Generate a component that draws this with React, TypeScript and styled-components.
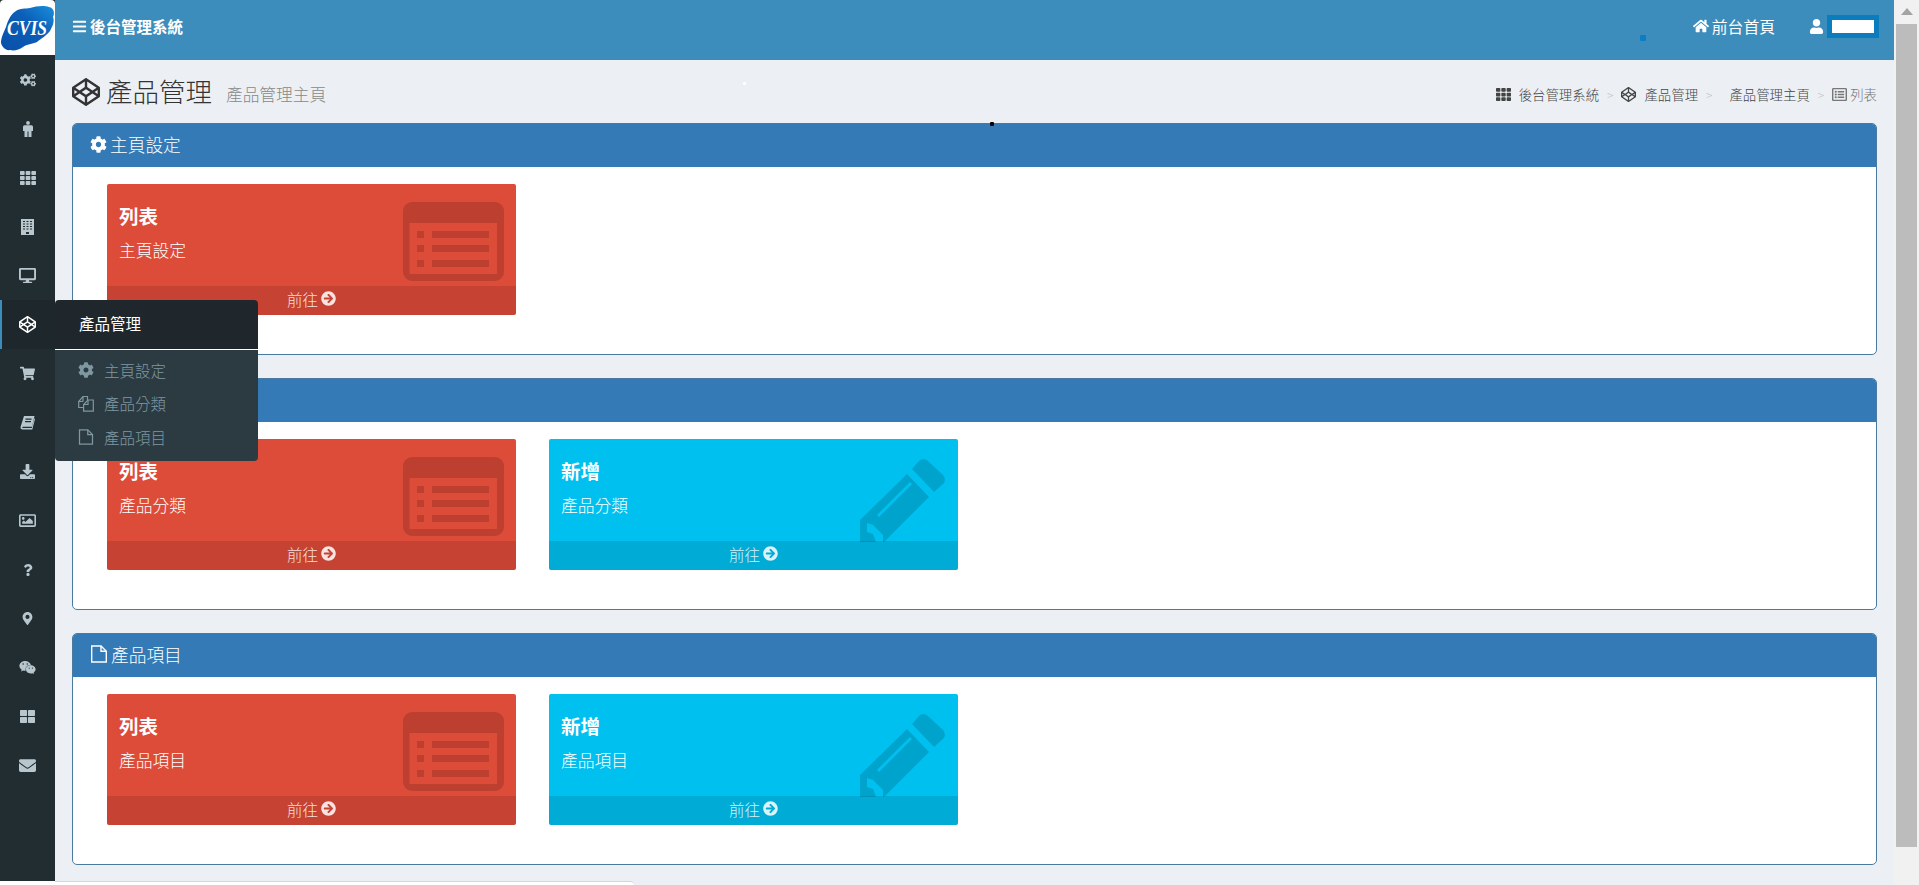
import React, { FC, ReactNode } from "react";
import styled, { createGlobalStyle } from "styled-components";
import {
  FaArrowCircleRight,
  FaBars,
  FaCodepen,
  FaCog,
  FaCogs,
  FaDesktop,
  FaDownload,
  FaEnvelope,
  FaHome,
  FaMapMarkerAlt,
  FaQuestion,
  FaRegImage,
  FaRegListAlt,
  FaShoppingCart,
  FaTh,
  FaThLarge,
  FaUser,
  FaWeixin,
} from "react-icons/fa";

const GlobalStyle = createGlobalStyle`
  html, body {
    margin: 0;
    padding: 0;
    overflow: hidden;
    background: #fff;
  }
  * {
    box-sizing: border-box;
  }
  body {
    font-family: "Noto Sans CJK TC", "Noto Sans", sans-serif;
  }
`;

const Screen = styled.div`
  width: 1919px;
  height: 885px;
  display: flex;
  overflow: hidden;
`;

const Page = styled.div`
  width: 1894px;
  display: flex;
  flex-direction: column;
`;

const Body = styled.div`
  height: 881px;
  display: flex;
`;

const Sidebar = styled.aside`
  width: 55px;
  background: #222d32;
  flex: none;
`;

const LogoBox = styled.div`
  height: 55px;
  background: #fff;
  border-radius: 4px 4px 0 0;
`;

const MenuItem = styled.div<{ $active?: boolean; $size: number }>`
  position: relative;
  height: 49px;
  display: flex;
  align-items: center;
  justify-content: center;
  font-size: ${(p) => p.$size}px;
  color: ${(p) => (p.$active ? "#fff" : "#b8c7ce")};
  background: ${(p) => (p.$active ? "#1e282c" : "transparent")};
  border-left: 2px solid ${(p) => (p.$active ? "#3c8dbc" : "transparent")};
  padding-right: 2px;
`;

const Flyout = styled.div`
  position: absolute;
  left: 53px;
  top: 0;
  width: 203px;
  z-index: 5;
`;

const FlyoutTitle = styled.div`
  height: 49px;
  padding: 0 0 4px 24px;
  display: flex;
  align-items: center;
  background: #20272c;
  border-radius: 4px 4px 0 0;
  color: #fff;
  font-size: 15.5px;
`;

const FlyoutList = styled.div`
  border-top: 1px solid #fff;
  background: #2c3b41;
  border-radius: 0 0 4px 4px;
  padding: 4px 0 6px;
`;

const FlyoutRow = styled.div`
  height: 33.5px;
  display: flex;
  align-items: center;
  padding: 0 0 2px 23px;
  gap: 10px;
  color: #7f97a1;
  font-size: 15.5px;
  font-weight: 300;
  svg {
    width: 16px;
    font-size: 16px;
    flex: none;
  }
`;

const Main = styled.div`
  flex: 1;
  display: flex;
  flex-direction: column;
  background: #ecf0f5;
  position: relative;
`;

const TopBar = styled.header`
  height: 60px;
  background: #3c8dbc;
  color: #fff;
  display: flex;
  align-items: center;
  padding: 0 15px 8px 17px;
  position: relative;
`;

const Brand = styled.div`
  display: flex;
  align-items: center;
  gap: 3px;
  font-size: 15.5px;
  font-weight: 700;
  flex: 1;
  svg {
    font-size: 15px;
  }
`;

const TopLink = styled.div`
  display: flex;
  align-items: center;
  gap: 3px;
  font-size: 15.8px;
  margin-right: 34px;
  svg {
    font-size: 16px;
  }
`;

const UserBox = styled.div`
  display: flex;
  align-items: center;
  gap: 3px;
  svg {
    font-size: 15px;
  }
`;

const UserName = styled.div`
  width: 52px;
  height: 23px;
  border: 5px solid #0b7dbd;
  background: #fff;
`;

const Speck = styled.span<{ $x: number; $y: number; $size: number; $color: string }>`
  position: absolute;
  left: ${(p) => p.$x}px;
  top: ${(p) => p.$y}px;
  width: ${(p) => p.$size}px;
  height: ${(p) => p.$size}px;
  background: ${(p) => p.$color};
  border-radius: 1px;
  z-index: 2;
`;

const Content = styled.main`
  flex: 1;
  padding: 0 17px;
`;

const TitleRow = styled.div`
  height: 63px;
  display: flex;
  align-items: center;
`;

const PageTitle = styled.h1`
  margin: 0;
  display: flex;
  align-items: center;
  gap: 6px;
  font-size: 26.5px;
  font-weight: 300;
  line-height: 1;
  color: #333;
  svg {
    font-size: 28px;
  }
`;

const SubTitle = styled.small`
  font-size: 16.7px;
  font-weight: 300;
  color: #888;
  margin: 5px 0 0 14px;
`;

const Crumbs = styled.nav`
  margin-left: auto;
  margin-top: 5px;
  display: flex;
  align-items: center;
  font-size: 13.4px;
  font-weight: 300;
  color: #444;
`;

const Crumb = styled.span<{ $gap?: number; $muted?: boolean }>`
  display: flex;
  align-items: center;
  gap: ${(p) => p.$gap ?? 8}px;
  color: ${(p) => (p.$muted ? "#777" : "#444")};
  svg {
    font-size: 15px;
  }
`;

const CrumbSep = styled.span<{ $wide?: boolean }>`
  color: #bbb;
  font-size: 12px;
  margin: 0 ${(p) => (p.$wide ? 17 : 8)}px 0 8px;
`;

const PanelStack = styled.div`
  display: flex;
  flex-direction: column;
  gap: 23.5px;
`;

const Panel = styled.section`
  height: 231.5px;
  background: #fff;
  border: 1px solid #4a7aa0;
  border-radius: 5px;
  overflow: hidden;
`;

const PanelHead = styled.div`
  height: 43px;
  background: #337ab7;
  color: #fff;
  display: flex;
  align-items: center;
  gap: 3px;
  padding: 0 0 3px 17px;
  font-size: 17.7px;
  font-weight: 300;
  svg {
    font-size: 17px;
    flex: none;
  }
`;

const PanelBody = styled.div`
  display: flex;
  gap: 33px;
  padding: 16.6px 34px;
`;

const Card = styled.div<{ $color: string }>`
  position: relative;
  width: 409px;
  height: 131px;
  border-radius: 2px;
  background: ${(p) => p.$color};
  color: #fff;
  display: flex;
  flex-direction: column;
`;

const CardText = styled.div`
  flex: 1;
  padding: 17px 12px 0;
`;

const CardTitle = styled.div`
  font-size: 19.5px;
  font-weight: 700;
  line-height: 30px;
`;

const CardSub = styled.div`
  font-size: 16.8px;
  font-weight: 300;
  line-height: 24px;
  margin-top: 7px;
`;

const CardIcon = styled.svg<{ $top: number }>`
  position: absolute;
  right: 12px;
  top: ${(p) => p.$top}px;
  fill: rgba(0, 0, 0, 0.15);
`;

const CardFoot = styled.div`
  height: 29px;
  padding-bottom: 3px;
  background: rgba(0, 0, 0, 0.1);
  color: rgba(255, 255, 255, 0.85);
  display: flex;
  align-items: center;
  justify-content: center;
  gap: 3px;
  font-size: 15.5px;
  font-weight: 300;
  border-radius: 0 0 2px 2px;
  svg {
    font-size: 15px;
  }
`;

const FootStrip = styled.div`
  height: 4px;
  display: flex;
  background: #ecf0f5;
`;

const FootLeft = styled.div`
  width: 55px;
  background: #fff;
`;

const FootBar = styled.div`
  width: 579px;
  background: #fff;
  border-top: 1px solid #d2d6de;
  border-radius: 0 4px 0 0;
`;

const ScrollRail = styled.div`
  width: 25px;
  background: #f1f1f1;
  padding: 8px 2px 0;
  display: flex;
  flex-direction: column;
`;

const ScrollArrow = styled.div`
  width: 0;
  height: 0;
  margin: 0 auto 9px;
  border-left: 6px solid transparent;
  border-right: 6px solid transparent;
  border-bottom: 7px solid #a3a3a3;
`;

const ScrollThumb = styled.div`
  height: 823px;
  background: #bcbcbc;
`;

const Logo: FC = () => (
  <svg width="55" height="55" viewBox="0 0 55 55">
    <defs>
      <linearGradient id="logoBlue" x1="0" y1="1" x2="1" y2="0">
        <stop offset="0" stopColor="#0a4fa8" />
        <stop offset="0.6" stopColor="#0b5fb8" />
        <stop offset="1" stopColor="#1b8fdc" />
      </linearGradient>
    </defs>
    <path
      fill="url(#logoBlue)"
      d="M1 43C1 38 3 34 6 27C8 20 11 14 16 11C20 8 25 9 30 8C36 6 44 5 49 7C54 8 55 13 53 17C55 22 52 27 50 31C46 36 42 38 37 42C32 44 27 44 23 47C19 50 14 51 10 50C6 51 2 47 1 43Z"
    />
    <text
      x="7"
      y="34.5"
      fontFamily="'Liberation Serif', serif"
      fontStyle="italic"
      fontWeight="700"
      fontSize="20"
      fill="#fff"
      textLength="40"
      lengthAdjust="spacingAndGlyphs"
    >
      CVIS
    </text>
  </svg>
);

const FilesIcon: FC = () => (
  <svg width="16" height="17" viewBox="0 0 16 17" fill="none" stroke="currentColor" strokeWidth="1.2">
    <path d="M5.5 12.5H.7V6.5L5 1.5H9.5V5.5" />
    <path d="M5 6.5L.7 6.5M5 1.5V6.5" />
    <path d="M5.6 16.2V9.5L10 5H15.3V16.2Z" />
    <path d="M10 5V9.5H5.6" />
  </svg>
);

const FileOutline: FC<{ size?: number }> = ({ size = 18 }) => (
  <svg height={size} width={size} viewBox="0 0 18 18" fill="none" stroke="currentColor" strokeWidth="1.4">
    <path d="M1.7 1H11L16.3 6.3V17H1.7Z" />
    <path d="M11 1V6.3H16.3" />
  </svg>
);

const SlantBook: FC = () => (
  <svg width="15" height="14" viewBox="0 0 15 14" fill="currentColor">
    <path
      fillRule="evenodd"
      d="M4 0H14.5L12 10.8H3C2.2 10.8 2 11.6 2.6 12H11.8L14.3 2.2L15 3L12.3 13.6H2.6C1 13.6.2 12.3.6 10.8ZM5.5 2.6V3.8H11.5V2.6ZM5 5V6.2H11V5Z"
    />
  </svg>
);

const PersonIcon: FC = () => (
  <svg width="10" height="16" viewBox="0 0 10 16" fill="currentColor">
    <circle cx="5" cy="1.9" r="1.9" />
    <path d="M1.5 4.2H8.5Q10 4.2 10 5.8V10H8.5V16H5.5V10.5H4.5V16H1.5V10H0V5.8Q0 4.2 1.5 4.2Z" />
  </svg>
);

const BuildingIcon: FC = () => (
  <svg width="13" height="16" viewBox="0 0 13 16" fill="currentColor">
    <path
      fillRule="evenodd"
      d="M0 0H13V16H0ZM2 2V3H4V2ZM5.5 2V3H7.5V2ZM9 2V3H11V2ZM2 4.5V5.5H4V4.5ZM5.5 4.5V5.5H7.5V4.5ZM9 4.5V5.5H11V4.5ZM2 7V8H4V7ZM5.5 7V8H7.5V7ZM9 7V8H11V7ZM2 9.5V10.5H4V9.5ZM5.5 9.5V10.5H7.5V9.5ZM9 9.5V10.5H11V9.5ZM5 13V15H8V13Z"
    />
  </svg>
);

const ListGlyph: FC = () => (
  <CardIcon $top={18} width="101" height="79" viewBox="0 0 101 79" fillRule="evenodd">
    <path d="M9 0H92A9 9 0 0 1 101 9V70A9 9 0 0 1 92 79H9A9 9 0 0 1 0 70V9A9 9 0 0 1 9 0ZM6.5 21V72H94V21Z" />
    <path d="M14 29H21V36H14ZM29 29H86V36H29ZM14 43H21V50H14ZM29 43H86V50H29ZM14 58H21V65H14ZM29 58H86V65H29Z" />
  </CardIcon>
);

const PencilGlyph: FC = () => (
  <CardIcon $top={19} width="86" height="84" viewBox="0 0 86 84" fillRule="evenodd">
    <path d="M52 11L59 3Q63 -1 68 3L83 17Q87 22 83 26L74 34Z" />
    <path d="M47 16L0 62V84H24L69 39ZM50 24L52 26L19 59L17 57ZM7 65L13 67L23 77V84H16L13 76L7 74Z" />
  </CardIcon>
);

type TileProps = { kind: "list" | "add"; sub: string };

const Tile: FC<TileProps> = ({ kind, sub }) => (
  <Card $color={kind === "list" ? "#dd4b39" : "#00c0ef"}>
    <CardText>
      <CardTitle>{kind === "list" ? "列表" : "新增"}</CardTitle>
      <CardSub>{sub}</CardSub>
    </CardText>
    {kind === "list" ? <ListGlyph /> : <PencilGlyph />}
    <CardFoot>
      前往 <FaArrowCircleRight />
    </CardFoot>
  </Card>
);

const panels: { icon: ReactNode; title: string; tiles: TileProps[] }[] = [
  { icon: <FaCog />, title: "主頁設定", tiles: [{ kind: "list", sub: "主頁設定" }] },
  {
    icon: <FilesIcon />,
    title: "產品分類",
    tiles: [
      { kind: "list", sub: "產品分類" },
      { kind: "add", sub: "產品分類" },
    ],
  },
  {
    icon: <FileOutline />,
    title: "產品項目",
    tiles: [
      { kind: "list", sub: "產品項目" },
      { kind: "add", sub: "產品項目" },
    ],
  },
];

const menu: { icon: ReactNode; size: number }[] = [
  { icon: <FaCogs />, size: 16 },
  { icon: <PersonIcon />, size: 16 },
  { icon: <FaTh />, size: 16 },
  { icon: <BuildingIcon />, size: 16 },
  { icon: <FaDesktop />, size: 17 },
  { icon: <FaCodepen />, size: 17 },
  { icon: <FaShoppingCart />, size: 15 },
  { icon: <SlantBook />, size: 14 },
  { icon: <FaDownload />, size: 15 },
  { icon: <FaRegImage />, size: 17 },
  { icon: <FaQuestion />, size: 12 },
  { icon: <FaMapMarkerAlt />, size: 13 },
  { icon: <FaWeixin />, size: 17 },
  { icon: <FaThLarge />, size: 15 },
  { icon: <FaEnvelope />, size: 17 },
];

const App: FC = () => (
  <Screen>
    <GlobalStyle />
    <Page>
      <Body>
        <Sidebar>
          <LogoBox>
            <Logo />
          </LogoBox>
          {menu.map((item, i) => (
            <MenuItem key={i} $active={i === 5} $size={item.size}>
              {item.icon}
              {i === 5 && (
                <Flyout>
                  <FlyoutTitle>產品管理</FlyoutTitle>
                  <FlyoutList>
                    <FlyoutRow>
                      <FaCog />
                      主頁設定
                    </FlyoutRow>
                    <FlyoutRow>
                      <FilesIcon />
                      產品分類
                    </FlyoutRow>
                    <FlyoutRow>
                      <FileOutline size={16} />
                      產品項目
                    </FlyoutRow>
                  </FlyoutList>
                </Flyout>
              )}
            </MenuItem>
          ))}
        </Sidebar>
        <Main>
          <TopBar>
            <Brand>
              <FaBars />
              後台管理系統
            </Brand>
            <TopLink>
              <FaHome />
              前台首頁
            </TopLink>
            <UserBox>
              <FaUser />
              <UserName />
            </UserBox>
            <Speck $x={1585} $y={35} $size={6} $color="#0b7dc4" />
          </TopBar>
          <Speck $x={688} $y={82} $size={3} $color="#fff" />
          <Speck $x={935} $y={122} $size={4} $color="#000" />
          <Content>
            <TitleRow>
              <PageTitle>
                <FaCodepen />
                產品管理
              </PageTitle>
              <SubTitle>產品管理主頁</SubTitle>
              <Crumbs>
                <Crumb>
                  <FaTh />
                  後台管理系統
                </Crumb>
                <CrumbSep>&gt;</CrumbSep>
                <Crumb>
                  <FaCodepen />
                  產品管理
                </Crumb>
                <CrumbSep $wide>&gt;</CrumbSep>
                <Crumb>產品管理主頁</Crumb>
                <CrumbSep>&gt;</CrumbSep>
                <Crumb $gap={3} $muted>
                  <FaRegListAlt />
                  列表
                </Crumb>
              </Crumbs>
            </TitleRow>
            <PanelStack>
              {panels.map((panel) => (
                <Panel key={panel.title}>
                  <PanelHead>
                    {panel.icon}
                    {panel.title}
                  </PanelHead>
                  <PanelBody>
                    {panel.tiles.map((tile) => (
                      <Tile key={tile.kind} {...tile} />
                    ))}
                  </PanelBody>
                </Panel>
              ))}
            </PanelStack>
          </Content>
        </Main>
      </Body>
      <FootStrip>
        <FootLeft />
        <FootBar />
      </FootStrip>
    </Page>
    <ScrollRail>
      <ScrollArrow />
      <ScrollThumb />
    </ScrollRail>
  </Screen>
);

export default App;
